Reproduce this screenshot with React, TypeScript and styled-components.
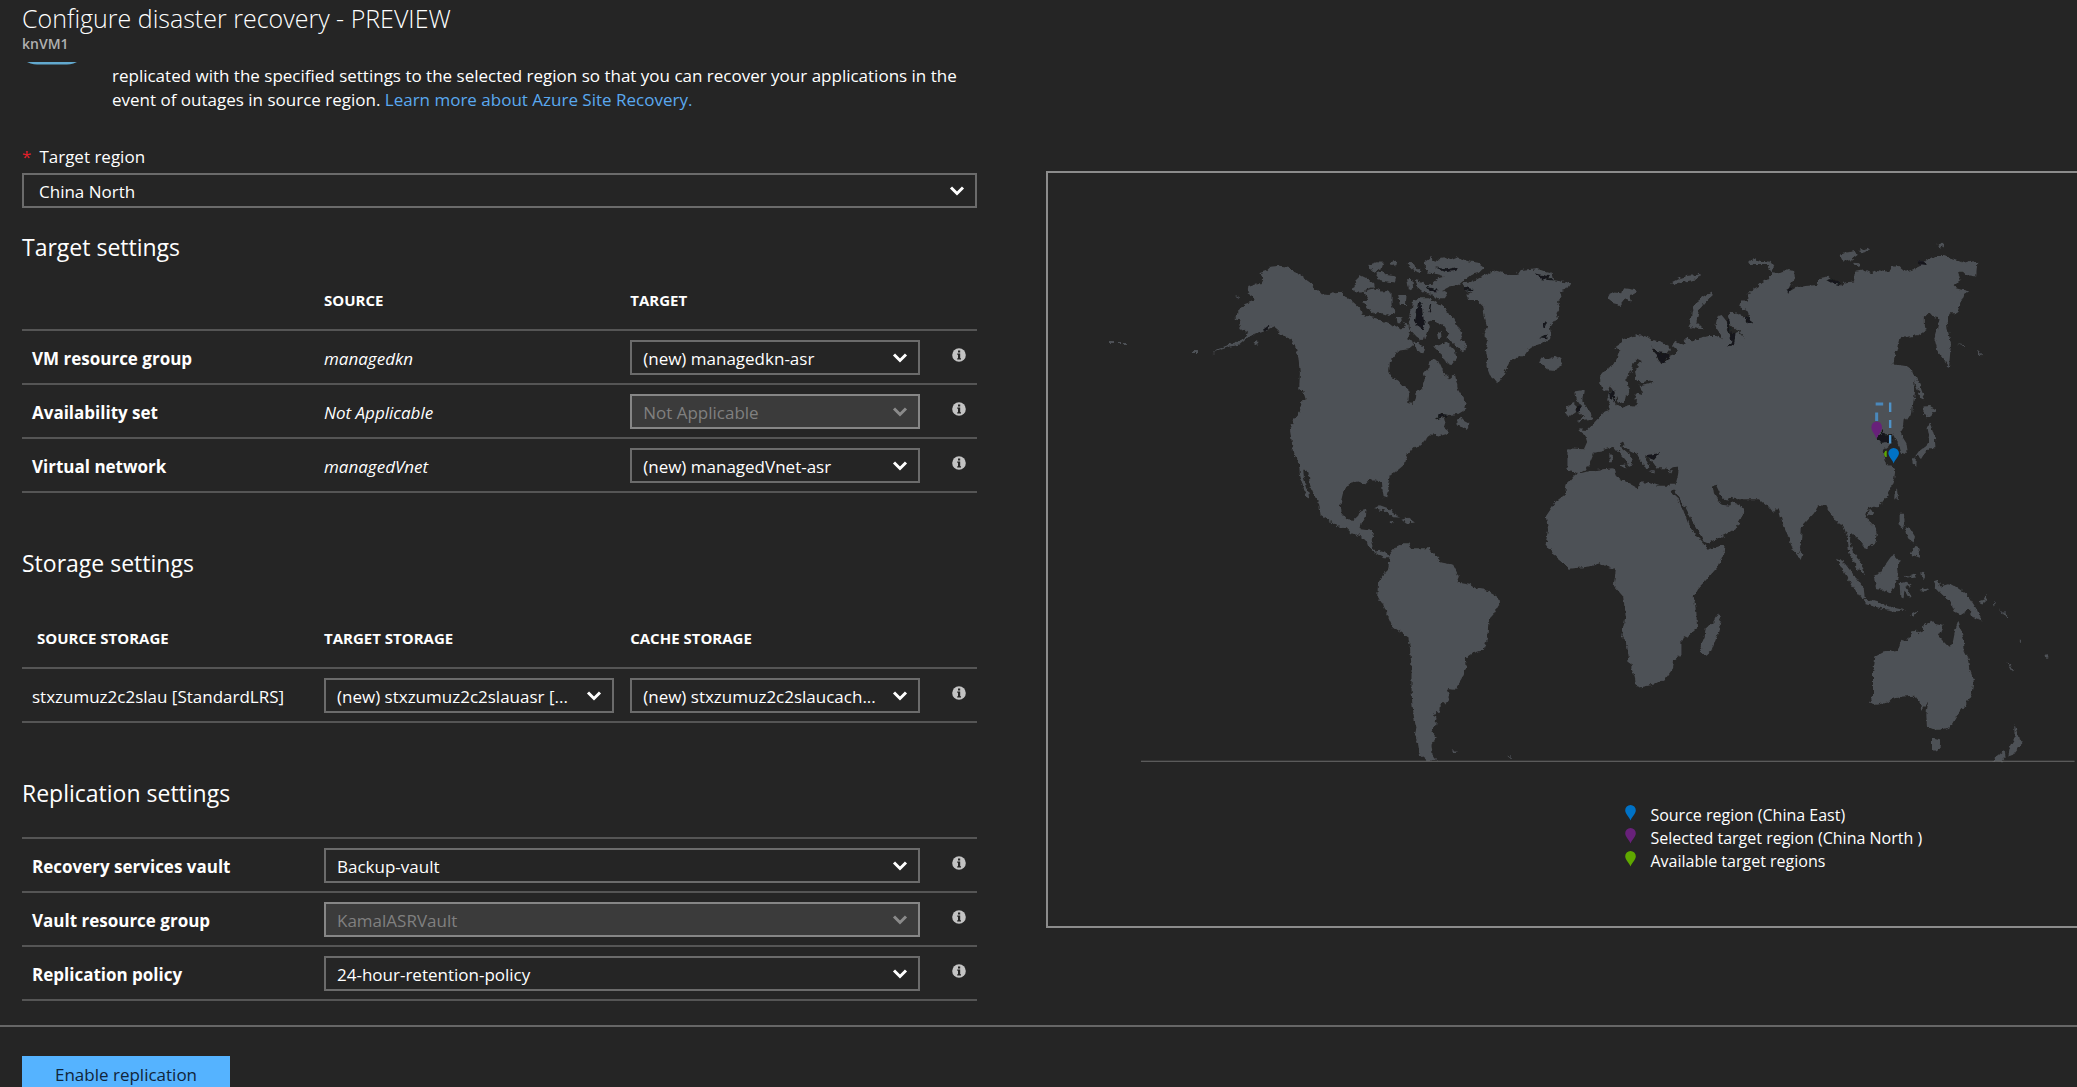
import React from "react";
import styled, { createGlobalStyle } from "styled-components";

const GlobalStyle = createGlobalStyle`
  *, *::before, *::after { box-sizing: border-box; }
  body {
    margin: 0;
    background: #252525;
    color: #fff;
    font-family: "Open Sans", "Noto Sans", sans-serif;
    font-size: 17px;
    line-height: 24px;
  }
`;

const Blade = styled.div`
  display: flex;
  flex-direction: column;
  height: 100vh;
  overflow: hidden;
`;

const Header = styled.header`
  flex: none;
  height: 61px;
  padding: 2px 22px 0;
`;

const Title = styled.h1`
  margin: 0;
  font-size: 25px;
  font-weight: 300;
  line-height: 33px;
`;

const Subtitle = styled.div`
  color: #b0b0b0;
  font-size: 14px;
  font-weight: 600;
  line-height: 18px;
`;

const Columns = styled.main`
  display: flex;
  flex: none;
  align-items: flex-start;
`;

const Form = styled.form`
  flex: none;
  width: 46%;
  margin: 0 69px 0 22px;
  padding-bottom: 24px;
`;

const Notice = styled.div`
  display: flex;
  margin-bottom: 33px;
`;

const NoticeIcon = styled.svg`
  flex: none;
  width: 60px;
  height: 4px;
  margin-right: 30px;
`;

const NoticeText = styled.p`
  margin: 0;
  padding-top: 3px;
`;

const Link = styled.a`
  color: #5aa9f0;
  text-decoration: none;
`;

const FieldLabel = styled.label`
  display: flex;
  gap: 8px;
  margin-bottom: 4px;
`;

const Required = styled.span`
  color: #e3202b;
`;

const SectionTitle = styled.h2<{ $below?: number }>`
  margin: 54px 0 ${(p) => p.$below ?? 1}px;
  font-size: 23px;
  font-weight: 400;
  line-height: 32px;
`;

const FirstSectionTitle = styled(SectionTitle)`
  margin-top: 23px;
`;

const Table = styled.table`
  width: 100%;
  table-layout: fixed;
  border-spacing: 0;
  tbody tr:last-child > * { border-bottom: 2px solid #555; }
`;

const LabelCol = styled.col`
  width: 302px;
`;

const InfoCol = styled.col`
  width: 41px;
`;

const HeadCell = styled.th<{ $inset?: boolean }>`
  padding: 24px 0 17px ${(p) => (p.$inset ? 15 : 0)}px;
  font-size: 15px;
  font-weight: 700;
  text-align: left;
`;

const RowHead = styled.th<{ $plain?: boolean }>`
  padding: 4px 0 0 10px;
  border-top: 2px solid #555;
  font-weight: ${(p) => (p.$plain ? 400 : 700)};
  text-align: left;
  white-space: nowrap;
`;

const SourceCell = styled.td`
  padding: 4px 0 0;
  border-top: 2px solid #555;
  font-style: italic;
`;

const ControlCell = styled.td`
  padding: 9px 16px 8px 0;
  border-top: 2px solid #555;
`;

const InfoCell = styled.td`
  padding: 17px 0 0 16px;
  border-top: 2px solid #555;
  vertical-align: top;
`;

const InfoButton = styled.button`
  display: block;
  padding: 0;
  border: 0;
  background: none;
  svg { display: block; }
`;

const SelectWrap = styled.div`
  position: relative;
`;

const SelectBox = styled.select<{ $wide?: boolean }>`
  display: block;
  width: 100%;
  height: 35px;
  padding: 2px 36px 0 ${(p) => (p.$wide ? 15 : 11)}px;
  border: 2px solid #6b6b6b;
  border-radius: 0;
  background: #252525;
  color: #fff;
  font: inherit;
  appearance: none;
  &:disabled {
    border-color: #868686;
    background: #3b3b3b;
    color: #808080;
    opacity: 1;
  }
`;

const Chevron = styled.svg<{ $dim?: boolean }>`
  position: absolute;
  top: 12px;
  right: 12px;
  width: 16px;
  height: 12px;
  fill: none;
  stroke: ${(p) => (p.$dim ? "#8a8a8a" : "#fff")};
  stroke-width: 3;
  pointer-events: none;
`;

const MapPanel = styled.section`
  flex: 1;
  min-width: 0;
  margin-top: 110px;
  border: 2px solid #8c8c8c;
  border-right: 0;
`;

const MapSvg = styled.svg`
  display: block;
  width: 100%;
  height: auto;
`;

const Legend = styled.ul`
  margin: 0;
  padding: 31px 0 53px 56%;
  list-style: none;
  font-size: 16px;
  line-height: 23px;
`;

const LegendItem = styled.li`
  display: flex;
  gap: 13px;
  white-space: nowrap;
  svg { flex: none; margin-top: 1px; }
`;

const Footer = styled.footer`
  position: relative;
  flex: 1;
  padding: 29px 22px 0;
  border-top: 2px solid #666;
`;

const PrimaryButton = styled.button`
  height: 38px;
  padding: 0 33px;
  border: 0;
  background: #55b3ff;
  color: #10253a;
  font: inherit;
`;

const StatusEdge = styled.div`
  position: absolute;
  bottom: 0;
  left: 0;
  width: 174px;
  height: 1px;
  background: #d8dcdf;
`;

function Select(props: { id: string; value: string; label?: string; disabled?: boolean; wide?: boolean }) {
  return (
    <SelectWrap>
      <SelectBox id={props.id} aria-label={props.label} disabled={props.disabled} $wide={props.wide}>
        <option>{props.value}</option>
      </SelectBox>
      <Chevron $dim={props.disabled} viewBox="0 0 16 12" aria-hidden="true">
        <path d="M2 2.5 L8 8.5 L14 2.5" />
      </Chevron>
    </SelectWrap>
  );
}

function Info({ topic }: { topic: string }) {
  return (
    <InfoCell>
      <InfoButton type="button" aria-label={"About " + topic}>
        <svg width="14" height="14" viewBox="0 0 14 14" aria-hidden="true">
          <circle cx="7" cy="7" r="6.8" fill="#c3c3c3" />
          <path d="M6 2.6h2.2v2H6zM5.2 5.6h3v4.6h.8v1.2H5.2v-1.2H6V6.8h-.8z" fill="#252525" />
        </svg>
      </InfoButton>
    </InfoCell>
  );
}

const PIN = "M0 15.5 C-1.5 11.5 -5.3 8.8 -5.3 5.2 A5.3 5.2 0 0 1 5.3 5.2 C5.3 8.8 1.5 11.5 0 15.5Z";

const northAmerica = [
  "M177,130 200,122 212,110 240,107 265,110 275,122 297,132 318,148 335,162 350,178 362,192 385,195 400,188 425,185 432,200 450,208 470,225 485,240 490,255 515,262 540,268 560,278 590,290 605,300 615,290 610,275 625,285 632,305 625,325 635,330 640,345 625,358 600,362 585,375 570,395 568,425 575,442 595,452 610,468 625,478 628,495 625,520 638,522 645,505 648,482 665,478 672,465 675,445 672,430 685,415 688,395 700,390 720,400 728,418 738,440 750,445 765,432 770,455 775,480 790,505 800,520 795,540 775,552 745,555 725,552 705,568 735,562 738,575 730,590 745,600 740,612 715,620 700,610 690,618 672,630 665,645 640,652 625,670 615,690 612,705 595,720 570,738 565,760 566,790 562,805 552,803 548,780 546,758 530,752 505,752 495,762 475,755 450,762 435,772 428,795 422,820 425,850 440,868 462,870 475,858 480,845 500,840 498,860 485,880 482,895 515,900 522,910 515,935 518,955 530,965 545,962 555,965 572,985 555,985 540,978 520,965 505,950 500,935 485,920 455,910 440,895 415,893 385,870 362,855 358,825 345,800 330,765 325,725 310,718 312,745 322,775 330,810 318,795 308,765 300,735 297,700 280,670 275,630 270,600 280,570 300,545 305,515 318,510 310,485 298,475 300,430 295,380 285,345 270,325 245,315 235,300 225,292 205,300 170,312 145,322 120,344 85,352 50,364 35,374 50,358 100,340 135,325 148,308 125,300 118,285 122,272 103,268 118,250 118,235 135,222 165,212 158,200 143,190 145,168 170,160 185,160 190,150Z",
  "M458,180 470,155 480,135 500,145 520,160 522,172 500,178 485,188 470,188Z",
  "M490,185 525,175 545,185 560,183 575,190 575,225 585,250 570,258 545,250 520,250 500,235 490,215 505,210Z",
  "M505,105 530,97 553,98 550,112 530,120 520,125Z",
  "M525,130 545,122 560,135 590,140 585,158 560,155 540,150Z",
  "M572,95 592,92 590,105 575,108Z",
  "M620,98 640,100 650,115 668,122 655,128 635,115Z",
  "M595,195 620,195 618,225 600,225Z",
  "M622,150 638,150 640,175 628,180Z",
  "M590,262 604,258 606,280 594,280Z",
  "M675,95 695,82 705,95 720,85 740,80 755,90 775,82 800,92 835,98 855,112 840,125 820,130 800,145 775,165 750,170 730,180 745,190 735,205 710,205 690,190 675,190 650,170 645,150 665,155 680,165 700,160 715,145 735,140 700,130 685,128 675,110Z",
  "M640,210 665,205 690,205 720,225 735,232 745,255 760,262 775,290 785,310 785,330 800,345 790,365 770,350 755,335 740,325 745,310 735,290 715,280 700,270 685,275 690,290 680,320 665,330 650,320 632,300 625,270 635,240Z",
  "M640,340 655,335 672,355 668,370 650,365Z",
  "M700,350 720,345 740,335 765,360 770,385 755,405 735,395 722,370Z",
  "M712,312 725,305 728,322 715,328Z",
  "M765,580 785,558 790,572 805,580 805,598 780,590Z",
  "M523,835 540,826 565,835 590,855 600,863 580,862 555,842Z",
  "M605,870 625,864 645,878 620,882Z",
  "M570,874 582,874 580,880 570,880Z",
  "M106,195 116,200 116,208Z",
  "M160,338 175,334 175,343 165,345Z",
];

const greenland = [
  "M790,160 810,158 840,142 865,130 890,122 930,135 950,135 960,120 985,118 1005,115 1035,125 1055,130 1060,150 1085,155 1112,160 1100,178 1080,185 1085,200 1075,215 1080,235 1070,250 1078,270 1060,275 1050,290 1055,325 1030,340 1000,350 985,360 975,375 950,385 930,395 920,415 905,445 895,460 885,448 870,435 860,410 862,380 858,360 865,330 850,315 862,290 855,265 850,230 830,210 805,210 800,195 815,190 795,180Z",
  "M1018,395 1025,383 1045,388 1070,378 1085,388 1085,408 1065,420 1045,418 1032,408Z",
];

const northAmericaInlets = [
  "M655,215 665,220 668,250 675,280 668,300 655,290 645,275 650,250Z",
  "M680,170 710,178 714,184 690,184Z",
  "M705,112 740,118 770,112 770,122 740,126Z",
  "M1005,130 1045,138 1060,152 1025,148Z",
  "M790,170 820,177 815,185 795,180Z",
  "M1030,280 1042,276 1036,292 1030,290Z",
  "M1015,325 1040,312 1040,328Z",
  "M188,300 212,282 214,286 196,304Z",
  "M690,222 694,222 690,248 686,246Z",
  "M705,568 725,552 745,555 738,560Z",
];

const eurasia = [
  "M108,655 155,658 165,635 160,618 143,605 142,598 165,600 175,590 190,572 215,545 228,540 230,525 222,510 226,490 240,478 248,495 245,525 262,535 285,528 305,530 310,515 300,505 305,490 322,495 320,480 315,468 340,464 355,458 345,452 320,458 305,450 302,425 310,405 318,393 308,388 297,400 292,425 280,435 277,450 280,470 285,485 275,500 272,515 258,520 250,505 242,480 232,470 225,485 212,485 202,460 202,435 215,420 240,405 250,385 258,360 245,352 262,340 265,330 285,322 310,315 335,320 350,330 375,335 395,345 402,360 395,370 370,368 350,352 348,360 362,375 375,400 392,395 400,378 415,372 425,360 410,345 415,332 430,340 445,345 440,330 455,320 465,335 485,325 510,318 535,318 550,325 545,310 532,290 538,260 550,255 565,275 568,300 575,320 580,335 570,348 585,345 588,310 600,305 620,328 605,305 590,300 575,285 568,258 575,245 600,255 620,262 635,280 630,260 625,245 600,230 605,215 628,215 625,195 635,180 655,170 665,158 685,145 695,130 710,132 740,120 758,122 760,145 750,160 735,190 760,175 790,168 825,165 830,145 855,140 870,155 895,168 900,158 930,155 935,125 960,120 980,130 1000,120 1025,125 1040,110 1060,108 1078,125 1100,118 1125,105 1135,92 1160,78 1190,78 1220,88 1245,98 1265,92 1283,100 1280,140 1255,135 1245,125 1228,125 1235,150 1215,165 1225,175 1260,185 1245,195 1235,220 1225,250 1205,250 1195,268 1198,300 1208,340 1205,375 1202,415 1190,395 1170,365 1160,325 1168,295 1175,265 1158,262 1148,250 1130,260 1130,285 1138,300 1115,315 1090,320 1060,325 1052,360 1040,403 1075,408 1095,415 1100,440 1105,480 1098,530 1095,560 1072,568 1070,590 1062,605 1068,620 1080,640 1083,660 1075,672 1065,668 1060,650 1050,635 1045,620 1040,612 1020,612 1012,605 998,625 1005,640 1020,638 1035,640 1028,650 1015,660 1018,680 1022,708 1040,712 1048,722 1045,745 1035,775 1020,805 1000,830 985,828 970,835 962,850 970,870 990,890 995,910 992,935 980,945 965,960 955,945 940,925 925,910 920,912 918,935 925,960 930,985 922,980 915,960 912,930 905,905 898,880 885,885 875,870 860,848 850,828 828,826 815,850 780,890 778,930 775,955 768,972 755,960 740,920 725,880 715,840 710,835 700,850 685,830 660,808 630,808 595,808 580,800 570,812 555,810 545,790 535,768 525,770 528,790 540,808 550,825 572,828 580,815 600,825 615,845 605,870 590,895 560,915 530,930 510,940 498,935 485,905 465,870 445,830 425,800 415,780 405,780 400,765 418,765 425,735 428,710 410,712 400,720 385,715 365,715 355,700 345,690 340,680 335,675 333,690 345,710 335,720 325,700 315,690 305,670 285,660 270,650 265,635 258,635 265,655 280,668 295,685 292,700 285,712 275,690 262,675 250,660 240,648 225,655 205,662 185,665 180,680 172,700 160,720 140,732 125,725 108,720Z",
  "M1130,530 1145,528 1165,540 1150,560 1135,562 1128,550Z",
  "M1145,575 1155,600 1162,625 1163,655 1145,655 1125,675 1105,680 1115,665 1140,645 1145,620 1140,590Z",
  "M1095,685 1110,685 1108,710 1098,700Z",
  "M1112,675 1132,670 1120,690Z",
  "M1092,425 1105,435 1118,465 1134,512 1120,500 1108,470Z",
  "M130,485 155,480 150,510 165,535 180,555 175,570 135,575 155,560 140,545 148,530 135,510Z",
  "M105,530 130,518 132,545 115,558 100,555Z",
  "M225,195 240,188 265,190 270,175 305,180 300,192 285,195 290,215 275,205 260,225 240,220 228,212Z",
  "M405,158 430,145 450,138 480,135 492,130 480,148 450,154 420,164Z",
  "M455,290 462,265 465,240 480,215 500,200 520,188 525,195 505,215 485,240 478,275 500,298 470,295Z",
  "M625,100 640,85 660,92 690,95 700,110 695,125 680,105 640,105Z",
  "M890,75 905,68 935,63 940,75 920,90 900,95Z",
  "M945,62 970,53 975,62 955,68Z",
  "M925,98 945,100 945,112Z",
  "M1168,45 1185,38 1188,48 1175,53Z",
  "M258,706 277,704 274,716Z",
  "M228,674 238,674 238,697 229,697Z",
  "M340,724 358,724 358,731Z",
  "M398,724 410,720 406,731Z",
  "M1225,342 1245,346 1245,350Z",
  "M1282,362 1290,368 1298,376 1288,374Z",
];

const eurasiaInlets = [
  "M345,350 370,368 398,372 400,380 385,402 370,392 365,378Z",
  "M998,625 1012,600 1020,618 1042,612 1040,636 1020,640 1005,642Z",
  "M1112,95 1135,95 1138,108 1120,106Z",
  "M735,180 755,170 740,192Z",
  "M565,270 572,270 576,310 590,308 586,345 565,350 578,335Z",
  "M618,262 632,262 637,284 625,278Z",
  "M132,532 144,530 144,542 135,545Z",
  "M228,490 238,480 245,502 243,518 238,505 230,506Z",
  "M335,675 372,670 356,690 345,686Z",
  "M850,150 868,146 892,165 866,160Z",
];

const southernLands = [
  "M150,165 170,140 190,130 205,130 215,145 265,145 285,165 305,188 340,195 357,230 350,248 390,255 405,265 435,270 475,292 478,315 460,345 446,360 443,410 432,450 400,460 378,475 380,500 365,540 345,570 320,568 330,592 320,608 300,615 298,638 282,642 290,655 285,680 275,695 288,712 275,735 278,765 292,782 262,782 240,765 235,735 225,705 230,685 222,650 217,610 215,560 215,500 210,440 205,412 180,395 158,380 145,350 130,315 112,290 115,245 130,225 145,210 148,180Z",
  "M706,-75 753,-88 821,-95 830,-70 863,-52 894,-35 900,-52 926,-52 957,-42 992,-42 999,-15 1015,0 1030,30 1045,70 1065,105 1090,130 1103,150 1155,135 1150,165 1135,200 1100,240 1075,265 1062,290 1070,340 1072,385 1050,405 1025,420 1025,465 1003,480 1000,505 975,540 950,553 900,563 888,555 885,530 870,490 862,440 845,405 858,350 850,290 822,258 828,208 800,200 780,190 750,200 690,207 645,170 618,130 625,90 618,50 648,5 675,-15 680,-45 701,-70Z",
  "M1082,440 1095,410 1098,382 1120,370 1135,343 1143,360 1135,400 1115,455 1100,468 1088,465Z",
  "M336,752 354,752 350,760 340,758Z",
  "M498,768 514,770 512,775Z",
];

const oceania = [
  "M292,357 310,365 330,390 350,415 372,445 376,478 360,470 340,440 315,400Z",
  "M376,480 410,486 440,497 470,505 500,512 470,514 430,507 378,493Z",
  "M328,320 345,345 365,370 376,406 355,388 340,358 328,338Z",
  "M402,405 420,400 440,370 460,342 480,365 472,385 475,410 465,440 450,460 430,450 410,448Z",
  "M480,430 500,426 516,434 500,441 516,472 506,472 495,452 491,476 482,470Z",
  "M492,408 510,410 530,402 526,413 500,416Z",
  "M480,222 493,222 495,250 490,266 480,256Z",
  "M498,262 512,268 526,290 522,308 505,295Z",
  "M510,345 528,318 540,324 541,354 525,348Z",
  "M545,398 553,394 556,412 548,414Z",
  "M580,425 595,420 602,440 625,433 650,440 680,460 700,490 712,510 726,541 700,532 690,508 665,525 645,515 635,490 605,462 590,445Z",
  "M715,488 732,482 742,462 744,480 728,494Z",
  "M760,482 768,492 766,498Z",
  "M778,505 805,530 800,534Z",
  "M540,450 560,444 572,448 556,454Z",
  "M508,525 536,510 522,527Z",
  "M407,650 430,638 475,630 485,600 500,605 525,568 538,580 550,575 550,560 575,543 590,553 612,558 605,575 597,590 628,622 640,605 648,565 657,543 665,575 673,600 675,635 688,660 692,690 703,720 695,765 675,800 650,830 632,862 605,870 585,870 562,860 560,825 565,790 545,810 540,785 525,768 490,770 455,778 445,788 405,796 388,785 400,770 400,700Z",
  "M577,893 603,900 600,920 590,935 577,935Z",
  "M824,852 833,880 838,903 853,905 835,925 820,945 806,950 810,925 825,900Z",
  "M795,933 798,950 785,965 758,963 775,948Z",
  "M803,668 810,672 824,695 818,694Z",
  "M915,648 926,646 926,656 917,657Z",
  "M840,600 844,600 844,610Z",
  "M472,148 475,180 464,178 465,160Z",
  "M384,215 393,210 403,217 400,228 386,228Z",
  "M178,323 191,345 186,360 176,352Z",
];

function Shapes({ paths, fill, transform }: { paths: string[]; fill: string; transform: string }) {
  return (
    <g transform={transform} fill={fill}>
      {paths.map((d) => (
        <path key={d} d={d} />
      ))}
    </g>
  );
}

const LAND = "#4e5156";
const DARK = "#15171a";
const WEST = "translate(1200 230) scale(.33333)";
const EAST = "translate(1530 230) scale(.34886 .33333)";

function WorldMap() {
  return (
    <MapSvg viewBox="1048 173 1029 600" role="img" aria-label="World map of source and target regions">
      <defs>
        <filter id="coast" x="0" y="0" width="1" height="1">
          <feTurbulence type="fractalNoise" baseFrequency=".22" numOctaves="2" seed="4" result="noise" />
          <feDisplacementMap in="SourceGraphic" in2="noise" scale="5" xChannelSelector="R" yChannelSelector="G" />
        </filter>
      </defs>
      <g filter="url(#coast)">
        <rect x="1048" y="173" width="1029" height="600" fill="none" />
        <Shapes paths={northAmerica} fill={LAND} transform={WEST} />
        <Shapes paths={greenland} fill={LAND} transform={WEST} />
        <Shapes paths={northAmericaInlets} fill={DARK} transform={WEST} />
        <Shapes paths={eurasia} fill={LAND} transform={EAST} />
        <Shapes paths={eurasiaInlets} fill={DARK} transform={EAST} />
        <Shapes paths={southernLands} fill={LAND} transform="translate(1340 500) scale(.33333)" />
        <Shapes paths={oceania} fill={LAND} transform="translate(1740 440) scale(.33333)" />
        <path d="M1110 342h4M1119 343h3M1124 344h3M1193 352h5" stroke={LAND} strokeWidth="2" />
      </g>
      <path d="M1141 761.5H2075" stroke="#6e6e6e" />
      <path d="M1876 404H1883.5M1877 412.5V421" stroke="#4a88bb" strokeWidth="3" fill="none" />
      <path d="M1890.5 402.5V412M1890.5 420V428M1890.5 435V443.5" stroke="#4f93c8" strokeWidth="2.4" />
      <path d="M1886.5 451v6c-2-1-2-5 0-6z" fill="#5fa800" stroke="#5fa800" />
      <path d={PIN} transform="translate(1877 421.5) scale(1 1.12)" fill="#68217a" />
      <path d={PIN} transform="translate(1894 448)" fill="#0072c6" />
    </MapSvg>
  );
}

function LegendRow({ color, text }: { color: string; text: string }) {
  return (
    <LegendItem>
      <svg width="13" height="17" viewBox="-6.5 0 13 17" aria-hidden="true">
        <path d={PIN} fill={color} />
      </svg>
      <span>{text}</span>
    </LegendItem>
  );
}

const targetRows = [
  { id: "vm-rg", label: "VM resource group", source: "managedkn", target: "(new) managedkn-asr" },
  { id: "av-set", label: "Availability set", source: "Not Applicable", target: "Not Applicable", disabled: true },
  { id: "vnet", label: "Virtual network", source: "managedVnet", target: "(new) managedVnet-asr" },
];

const replicationRows = [
  { id: "vault", label: "Recovery services vault", value: "Backup-vault" },
  { id: "vault-rg", label: "Vault resource group", value: "KamalASRVault", disabled: true },
  { id: "policy", label: "Replication policy", value: "24-hour-retention-policy" },
];

function Cols() {
  return (
    <colgroup>
      <LabelCol />
      <col />
      <col />
      <InfoCol />
    </colgroup>
  );
}

export default function App() {
  return (
    <Blade>
      <GlobalStyle />
      <Header>
        <Title>Configure disaster recovery - PREVIEW</Title>
        <Subtitle>knVM1</Subtitle>
      </Header>
      <Columns>
        <Form id="replication" onSubmit={(e) => e.preventDefault()}>
          <Notice>
            <NoticeIcon viewBox="0 0 60 4" aria-hidden="true">
              <path d="M5 1H55C50 3.5 46 3.5 42 3.5H18C14 3.5 10 3.5 5 1Z" fill="#62a9cf" />
            </NoticeIcon>
            <NoticeText>
              replicated with the specified settings to the selected region so that you can recover your applications in the
              event of outages in source region. <Link href="#learn">Learn more about Azure Site Recovery.</Link>
            </NoticeText>
          </Notice>
          <FieldLabel htmlFor="region">
            <Required>*</Required>Target region
          </FieldLabel>
          <Select id="region" value="China North" wide />

          <FirstSectionTitle>Target settings</FirstSectionTitle>
          <Table>
            <Cols />
            <thead>
              <tr>
                <HeadCell />
                <HeadCell scope="col">SOURCE</HeadCell>
                <HeadCell scope="col">TARGET</HeadCell>
                <HeadCell />
              </tr>
            </thead>
            <tbody>
              {targetRows.map((r) => (
                <tr key={r.id}>
                  <RowHead scope="row"><label htmlFor={r.id}>{r.label}</label></RowHead>
                  <SourceCell>{r.source}</SourceCell>
                  <ControlCell><Select id={r.id} value={r.target} disabled={r.disabled} /></ControlCell>
                  <Info topic={r.label} />
                </tr>
              ))}
            </tbody>
          </Table>

          <SectionTitle $below={23}>Storage settings</SectionTitle>
          <Table>
            <Cols />
            <thead>
              <tr>
                <HeadCell scope="col" $inset>SOURCE STORAGE</HeadCell>
                <HeadCell scope="col">TARGET STORAGE</HeadCell>
                <HeadCell scope="col">CACHE STORAGE</HeadCell>
                <HeadCell />
              </tr>
            </thead>
            <tbody>
              <tr>
                <RowHead scope="row" $plain>stxzumuz2c2slau [StandardLRS]</RowHead>
                <ControlCell><Select id="target-storage" label="Target storage" value="(new) stxzumuz2c2slauasr [..." /></ControlCell>
                <ControlCell><Select id="cache-storage" label="Cache storage" value="(new) stxzumuz2c2slaucach..." /></ControlCell>
                <Info topic="storage" />
              </tr>
            </tbody>
          </Table>

          <SectionTitle $below={28}>Replication settings</SectionTitle>
          <Table>
            <Cols />
            <tbody>
              {replicationRows.map((r) => (
                <tr key={r.id}>
                  <RowHead scope="row"><label htmlFor={r.id}>{r.label}</label></RowHead>
                  <ControlCell colSpan={2}><Select id={r.id} value={r.value} disabled={r.disabled} /></ControlCell>
                  <Info topic={r.label} />
                </tr>
              ))}
            </tbody>
          </Table>
        </Form>
        <MapPanel>
          <WorldMap />
          <Legend>
            <LegendRow color="#0072c6" text="Source region (China East)" />
            <LegendRow color="#68217a" text="Selected target region (China North )" />
            <LegendRow color="#5fa800" text="Available target regions" />
          </Legend>
        </MapPanel>
      </Columns>
      <Footer>
        <PrimaryButton type="submit" form="replication">Enable replication</PrimaryButton>
        <StatusEdge />
      </Footer>
    </Blade>
  );
}
